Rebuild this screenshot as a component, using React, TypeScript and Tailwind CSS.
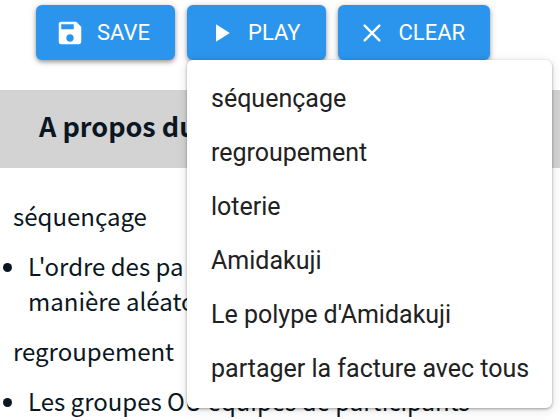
import { MdPlayArrow, MdSave } from "react-icons/md";
import type { ComponentType, SVGProps } from "react";

function ClearIcon(props: SVGProps<SVGSVGElement>) {
  return (
    <svg viewBox="0 0 24 24" fill="none" stroke="currentColor" strokeWidth="1.9" strokeLinecap="round" {...props}>
      <path d="M6.1 6.1l11.8 11.8M17.9 6.1L6.1 17.9" />
    </svg>
  );
}

const actions: { label: string; icon: ComponentType<{ className?: string; "aria-hidden"?: "true" }> }[] = [
  { label: "SAVE", icon: MdSave },
  { label: "PLAY", icon: MdPlayArrow },
  { label: "CLEAR", icon: ClearIcon },
];

const games = [
  "séquençage",
  "regroupement",
  "loterie",
  "Amidakuji",
  "Le polype d'Amidakuji",
  "partager la facture avec tous",
];

function PlayMenu() {
  return (
    <div
      role="menu"
      className="absolute left-0 top-full z-10 flex flex-col rounded-md bg-white py-3 shadow-[0_1px_3px_rgba(0,0,0,0.35),0_2px_12px_rgba(0,0,0,0.12)]"
    >
      {games.map((game) => (
        <button
          key={game}
          role="menuitem"
          className="pr-[23px] pl-6 py-2 text-left text-[25px] leading-[38px] whitespace-nowrap text-[#212121] hover:bg-gray-100"
        >
          {game}
        </button>
      ))}
    </div>
  );
}

export default function App() {
  return (
    <div className="min-h-screen overflow-hidden bg-white font-['Noto_Sans_CJK_JP',sans-serif] text-[#0a1621]">
      {/* Toolbar */}
      <div className="flex gap-3 pt-[5px] pl-9 font-[Roboto,sans-serif]">
        {actions.map(({ label, icon: Icon }) => (
          <div key={label} className="relative">
            <button className="flex h-[55px] items-center gap-3 rounded-md bg-[#2b94ec] pr-[25px] pl-[19px] text-[22px] text-white shadow-[0_2px_4px_rgba(0,0,0,0.35),0_1px_8px_rgba(0,0,0,0.12)] hover:bg-[#1f82d6]">
              <Icon className="size-[30px]" aria-hidden="true" />
              {label}
            </button>
            {label === "PLAY" && <PlayMenu />}
          </div>
        ))}
      </div>

      {/* Description */}
      <h2 className="mt-[30px] bg-[#d3d3d3] pt-4 pb-[22px] pl-[39px] text-[27px] leading-10 font-bold whitespace-nowrap">
        A propos du
      </h2>

      <div className="pt-[30px] text-2xl leading-[35px]">
        <p className="pl-[13px]">séquençage</p>
        <ul className="mt-[15px] list-disc pl-7">
          <li>
            L'ordre des pa
            <br />
            manière aléato
          </li>
        </ul>
        <p className="mt-[15px] pl-[13px]">regroupement</p>
        <ul className="mt-[15px] list-disc pl-7">
          <li className="whitespace-nowrap">Les groupes OU équipes de participants</li>
        </ul>
      </div>
    </div>
  );
}
